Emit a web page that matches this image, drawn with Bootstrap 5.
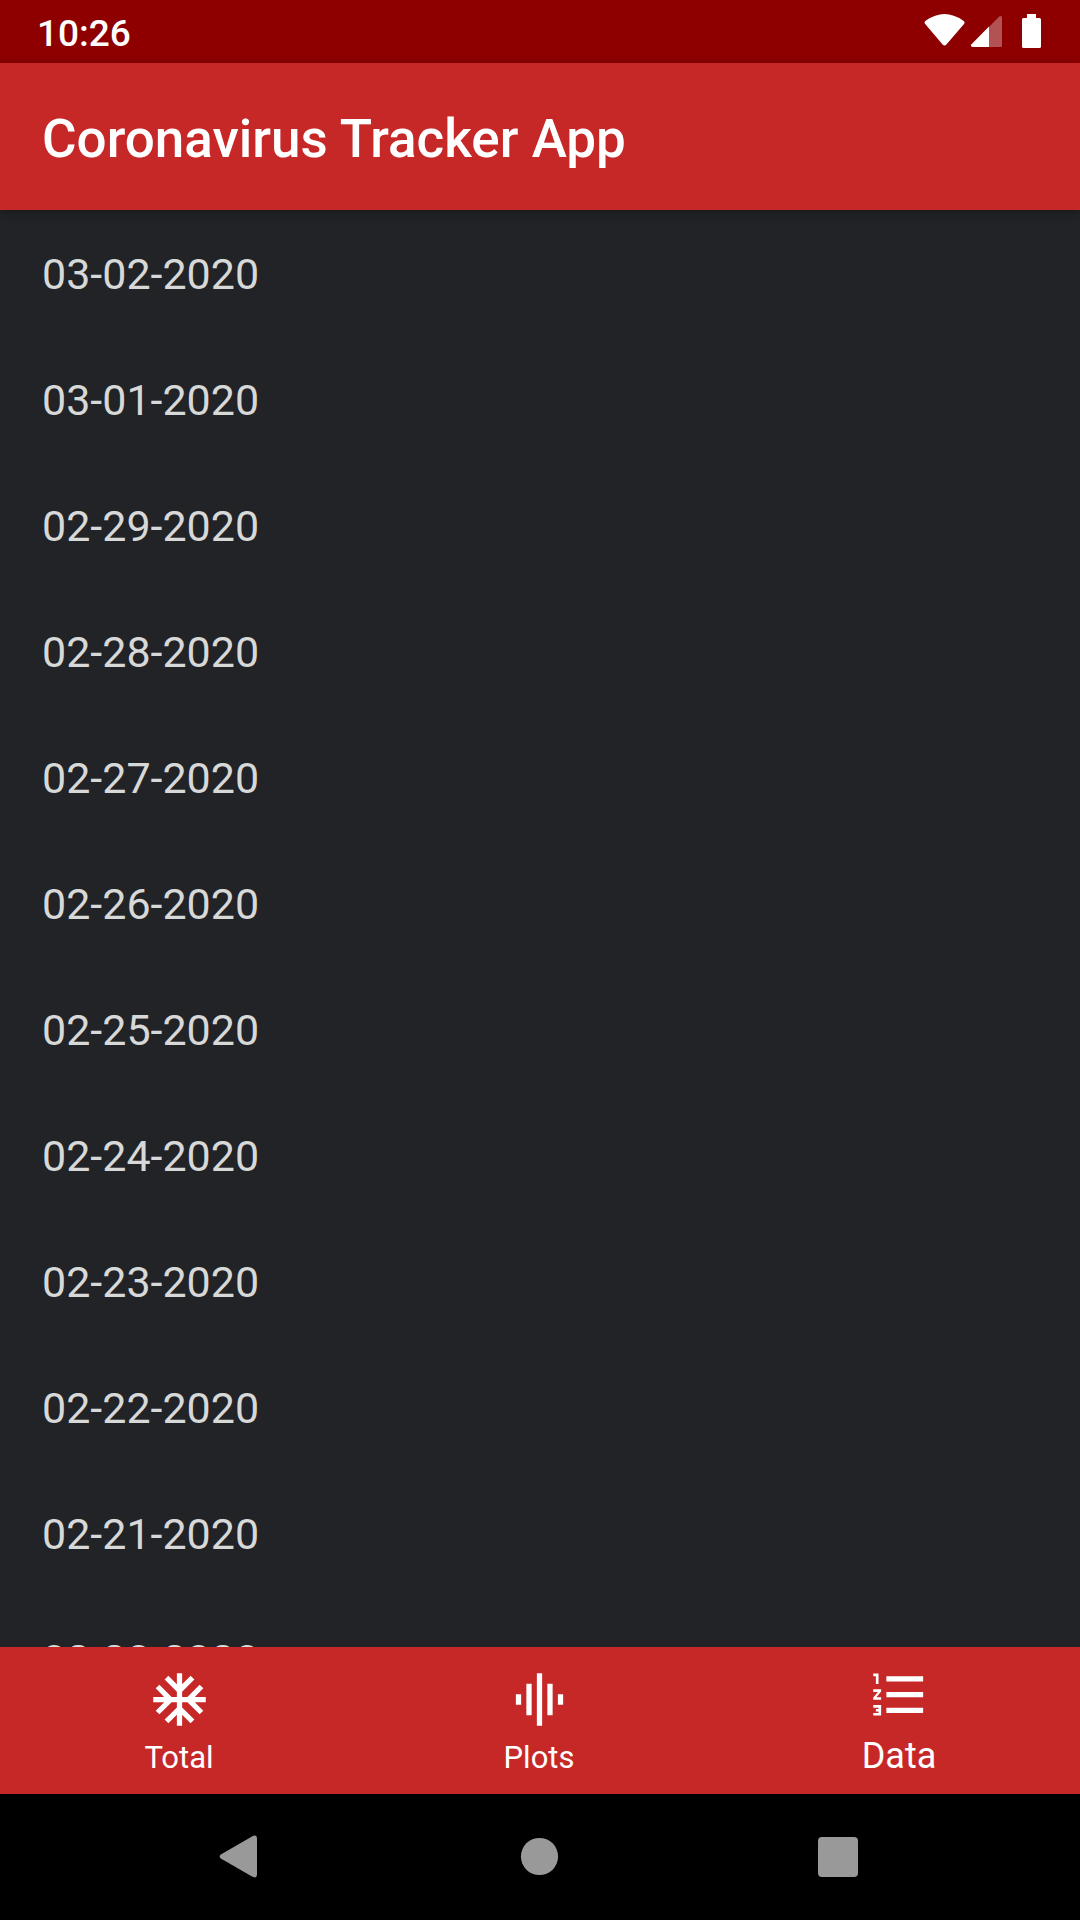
<!DOCTYPE html>
<html lang="en">
<head>
<meta charset="utf-8">
<meta name="viewport" content="width=device-width, initial-scale=1">
<title>Coronavirus Tracker App</title>
<link href="https://cdn.jsdelivr.net/npm/bootstrap@5.3.0/dist/css/bootstrap.min.css" rel="stylesheet">
<style>
  body { font-family: Roboto, sans-serif; background: #222327; }
  .status-bar { height: 63px; background: #8e0000; padding: 0 36px 0 37px; }
  .status-time { font-size: 37px; line-height: 42px; font-weight: 500; padding-top: 4px; }
  .app-bar { height: 147px; background: #c62828; padding: 4px 42px 0; box-shadow: 0 2px 10px rgba(0, 0, 0, .35); z-index: 1; }
  .app-title { font-size: 53px; line-height: 62px; font-weight: 500; }
  .date-list { min-height: 0; scrollbar-width: none; }
  .date-list::-webkit-scrollbar { display: none; }
  .date-row { height: 126px; padding: 2px 42px 0; font-size: 43px; line-height: 50px; color: #d7d8d8; }
  .date-row:hover { color: #fff; }
  .tab-bar { height: 147px; background: #c62828; }
  .tab-item { padding: 21px 2px 15px 0; font-size: 31px; line-height: 42px; }
  .tab-item.selected { padding: 16px 2px 16px 0; font-size: 36px; line-height: 44px; }
  .system-bar { height: 126px; background: #000; }
  .system-key { width: 300px; color: #999; }
</style>
</head>
<body>
<div class="d-flex flex-column vh-100 overflow-hidden">
  <div class="status-bar d-flex flex-shrink-0 align-items-center justify-content-between text-white">
    <span class="status-time">10:26</span>
    <svg width="120" height="63" viewBox="924 0 120 63" fill="#fff" aria-hidden="true">
      <path d="M926 20.500Q944.500 7.500 963 20.500Q965.500 22 964 24L946.200 44.700Q944.500 46.300 942.800 44.700L925.200 24Q923.500 22 926 20.500Z"/>
      <path fill-opacity=".32" d="M989 27L998.700 17Q1002 14.500 1002 18V45.500Q1002 47 1000.500 47H989Z"/>
      <path d="M989 26.500V47H972.500Q970 46.500 971.500 44.300Z"/>
      <path d="M1027 14H1036V18H1039.500Q1041 18 1041 19.500V46.500Q1041 48 1039.500 48H1023.500Q1022 48 1022 46.500V19.500Q1022 18 1023.500 18H1027Z"/>
    </svg>
  </div>

  <header class="app-bar d-flex flex-shrink-0 align-items-center position-relative text-white">
    <h1 class="app-title mb-0">Coronavirus Tracker App</h1>
  </header>

  <main class="date-list flex-grow-1 overflow-auto">
    <a href="#" class="date-row d-flex align-items-center text-decoration-none">03-02-2020</a>
    <a href="#" class="date-row d-flex align-items-center text-decoration-none">03-01-2020</a>
    <a href="#" class="date-row d-flex align-items-center text-decoration-none">02-29-2020</a>
    <a href="#" class="date-row d-flex align-items-center text-decoration-none">02-28-2020</a>
    <a href="#" class="date-row d-flex align-items-center text-decoration-none">02-27-2020</a>
    <a href="#" class="date-row d-flex align-items-center text-decoration-none">02-26-2020</a>
    <a href="#" class="date-row d-flex align-items-center text-decoration-none">02-25-2020</a>
    <a href="#" class="date-row d-flex align-items-center text-decoration-none">02-24-2020</a>
    <a href="#" class="date-row d-flex align-items-center text-decoration-none">02-23-2020</a>
    <a href="#" class="date-row d-flex align-items-center text-decoration-none">02-22-2020</a>
    <a href="#" class="date-row d-flex align-items-center text-decoration-none">02-21-2020</a>
    <a href="#" class="date-row d-flex align-items-center text-decoration-none">02-20-2020</a>
  </main>

  <nav class="tab-bar d-flex flex-shrink-0" aria-label="Sections">
    <button type="button" class="tab-item d-flex flex-column flex-fill w-100 align-items-center justify-content-between border-0 bg-transparent text-white">
      <svg width="63" height="63" viewBox="0 0 24 24" fill="currentColor" aria-hidden="true"><path d="M22 11h-4.170l3.240-3.240-1.410-1.420L15 11h-2V9l4.660-4.660-1.420-1.410L13 6.170V2h-2v4.170L7.760 2.930 6.340 4.340 11 9v2H9L4.340 6.340 2.930 7.760 6.170 11H2v2h4.170l-3.240 3.240 1.410 1.420L9 13h2v2l-4.660 4.660 1.420 1.410L11 17.830V22h2v-4.170l3.240 3.240 1.420-1.410L13 15v-2h2l4.660 4.660 1.410-1.420L17.830 13H22z"/></svg>
      <span>Total</span>
    </button>
    <button type="button" class="tab-item d-flex flex-column flex-fill w-100 align-items-center justify-content-between border-0 bg-transparent text-white">
      <svg width="63" height="63" viewBox="0 0 24 24" fill="currentColor" aria-hidden="true"><path d="M7 18h2V6H7v12zm4 4h2V2h-2v20zm-8-8h2v-4H3v4zm12 4h2V6h-2v12zm4-8v4h2v-4h-2z"/></svg>
      <span>Plots</span>
    </button>
    <button type="button" aria-current="page" class="tab-item selected d-flex flex-column flex-fill w-100 align-items-center justify-content-between border-0 bg-transparent text-white">
      <svg width="63" height="63" viewBox="0 0 24 24" fill="currentColor" aria-hidden="true"><path d="M2 17h2v.5H3v1h1v.5H2v1h3v-4H2v1zm1-9h1V4H2v1h1v3zm-1 3h1.800L2 13.100v.9h3v-1H3.200L5 10.900V10H2v1zm5-6v2h14V5H7zm0 14h14v-2H7v2zm0-6h14v-2H7v2z"/></svg>
      <span>Data</span>
    </button>
  </nav>

  <div class="system-bar d-flex flex-shrink-0 justify-content-center">
    <button type="button" aria-label="Back" class="system-key border-0 bg-transparent p-0">
      <svg width="48" height="48" viewBox="0 0 48 48" fill="currentColor" aria-hidden="true"><path d="M4.800 21.600L36 3.400Q41 1 41 6V41Q41 46 36 43.600L4.800 25.400Q2.500 23.500 4.800 21.600Z"/></svg>
    </button>
    <button type="button" aria-label="Home" class="system-key border-0 bg-transparent p-0">
      <svg width="48" height="48" viewBox="0 0 48 48" fill="currentColor" aria-hidden="true"><circle cx="23.500" cy="23.500" r="18.600"/></svg>
    </button>
    <button type="button" aria-label="Recent apps" class="system-key border-0 bg-transparent p-0">
      <svg width="48" height="48" viewBox="0 0 48 48" fill="currentColor" aria-hidden="true"><rect x="2" y="4" width="40" height="40" rx="4"/></svg>
    </button>
  </div>
</div>
<script src="https://cdn.jsdelivr.net/npm/bootstrap@5.3.0/dist/js/bootstrap.bundle.min.js"></script>
</body>
</html>
